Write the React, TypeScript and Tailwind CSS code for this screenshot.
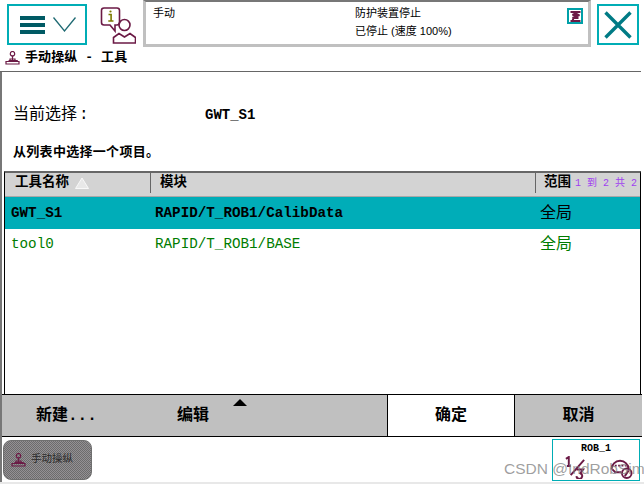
const CJK = "font-['Liberation_Mono','Noto_Sans_CJK_SC',monospace]";

const ROWS = [
  { name: "GWT_S1", module: "RAPID/T_ROB1/CalibData", scope: "全局", selected: true },
  { name: "tool0", module: "RAPID/T_ROB1/BASE", scope: "全局", selected: false },
];

function Joystick({ className }: { className: string }) {
  return (
    <svg viewBox="0 0 15 14" className={className} fill="none" stroke="currentColor" strokeWidth="1.2">
      <circle cx="7.5" cy="2.7" r="2.2" />
      <path d="M7.5 5v4" />
      <path d="M5 9.5V8h5v1.5" />
      <path d="M3.6 9.5h9.2v0M1 13V10.5h13V13z" />
    </svg>
  );
}

function MenuButton() {
  return (
    <div className="ml-[7px] mt-[4px] w-[80px] h-[41px] border-2 border-[#00adb5] flex items-center pl-[11px] gap-[8px] shrink-0">
      <div className="flex flex-col gap-[3px] w-[25px]">
        <div className="h-[4px] bg-[#005a64]" />
        <div className="h-[4px] bg-[#005a64]" />
        <div className="h-[4px] bg-[#005a64]" />
      </div>
      <svg viewBox="0 0 23 15" className="w-[23px] h-[15px]" fill="none" stroke="#1f6a73" strokeWidth="1.3">
        <path d="M0.5 0.5L11.5 14L22.5 0.5" />
      </svg>
    </div>
  );
}

function InfoIcon() {
  return (
    <svg viewBox="0 0 36 38" className="w-[36px] h-[38px] ml-[13px] mt-[6px] shrink-0" fill="none" stroke="#6b1a45" strokeWidth="1.6">
      <path d="M4 2h13a2.5 2.5 0 0 1 2.5 2.5v12a2.5 2.5 0 0 1-2.5 2.5h-2l0 6-5-6H4a2.500 2.500 0 0 1-2.500-2.500V4.500A2.500 2.500 0 0 1 4 2z" />
      <circle cx="10.500" cy="5.500" r="1.100" fill="#7a7a00" stroke="none" />
      <path d="M8.500 8.500h2.600v6.500M8.300 15h5.200" stroke="#7a7a00" strokeWidth="1.600" />
      <circle cx="24.500" cy="19" r="5.500" />
      <path d="M13.500 37v-5.500l5.500-4 5.500 3.500 5.500-3.500 5.500 4V37z" />
    </svg>
  );
}

function StatusPanel() {
  return (
    <div className="w-[448px] h-[47px] ml-[7px] shrink-0 border-x-[3px] border-b-[3px] border-x-[#c0c0c0] border-b-[#c0c0c0] border-t-2 border-t-[#777777] flex text-[11px] leading-[18px] text-black font-['Liberation_Sans','Noto_Sans_CJK_SC',sans-serif]">
      <div className="w-[209px] pl-[7px] pt-[2px]">手动</div>
      <div className="flex-1 pt-[2px]">
        <div>防护装置停止</div>
        <div>已停止 (速度 100%)</div>
      </div>
      <div className="mt-[6px] mr-[5px] w-[16px] h-[16px] border-2 border-[#00a0a8] flex items-center justify-center">
        <svg viewBox="0 0 10 11" className="w-[11px] h-[11px]" fill="none" stroke="#6b1a45" strokeWidth="2">
          <path d="M0 1h10M8 1L2 4h7L2 7h6M0 10h10M3 7l-1 3" />
        </svg>
      </div>
    </div>
  );
}

function CloseButton() {
  return (
    <div className="ml-[6px] mt-[4px] w-[42px] h-[41px] border-2 border-[#00adb5] flex items-center justify-center shrink-0">
      <svg viewBox="0 0 28 28" className="w-[28px] h-[28px]" stroke="#007b85" strokeWidth="3.400">
        <path d="M1.500 1.500L26.500 26.500M26.500 1.500L1.500 26.500" />
      </svg>
    </div>
  );
}

function RobBox() {
  return (
    <div className="mr-[2px] mt-[2px] w-[88px] h-[42px] border border-[#00adb5] flex flex-col items-center">
      <div className="text-[10px] leading-[12px] mt-[3px] font-bold text-black">ROB_1</div>
      <div className="flex gap-[22px] mt-px ml-[4px]">
        <svg viewBox="0 0 24 24" className="w-[23px] h-[23px]" fill="none" stroke="#6b1a45" strokeWidth="2">
          <path d="M2 3l3-2v10M3 10.500h4M7 20L21 4" />
          <path d="M13 14h7l-3 4a3 3 0 1 1-4 3" />
        </svg>
        <svg viewBox="0 0 24 24" className="w-[24px] h-[23px]" fill="none" stroke="#6b1a45" strokeWidth="2">
          <path d="M2 14a9 9 0 0 1 18 0" />
          <path d="M2 10h18" strokeDasharray="2 1.500" />
          <path d="M3 14l3 3h6" />
          <circle cx="18" cy="18" r="5" />
          <path d="M16 21l4-6" />
        </svg>
      </div>
    </div>
  );
}

export default function App() {
  return (
    <div className={`relative w-[644px] h-[484px] bg-white flex flex-col overflow-hidden border-b-2 border-b-[#e8e8e8] ${CJK}`}>
      <div className="flex h-[47px] shrink-0">
        <MenuButton />
        <InfoIcon />
        <StatusPanel />
        <CloseButton />
      </div>

      <div className="h-[25px] shrink-0 mr-[3px] border-b border-[#666666] flex items-center pl-[5px] pb-[2px] text-black">
        <Joystick className="w-[15px] h-[14px] text-[#6b1a45]" />
        <span className="ml-[5px] text-[13px] font-bold tracking-[0.1px]">手动操纵 - 工具</span>
      </div>

      <div className="flex-1 flex flex-col min-h-0 mr-[2px] border-l-2 border-[#777777]">
        <div className="h-[99px] shrink-0 pl-[11px] text-black">
          <div className="flex items-center h-[20px] mt-[33px] text-[16px]">
            <span className="w-[192px]">当前选择<span className="ml-[2px]">:</span></span>
            <span className="text-[14px] font-bold">GWT_S1</span>
          </div>
          <div className="mt-[20px] text-[13px] font-bold leading-[16px] tracking-[0.3px]">从列表中选择一个项目。</div>
        </div>

        <div className="flex-1 flex flex-col min-h-0 ml-[2px] mr-[1px] border-x border-x-black border-t-2 border-t-[#666666]">
          <div className="flex h-[24px] shrink-0 bg-[#d3d3d3] text-[13.5px] font-bold text-black border-b border-[#a8a8a8] pb-[3px]">
            <div className="w-[146px] pl-[10px] flex items-center border-r border-[#666666]">
              <span>工具名称</span>
              <svg viewBox="0 0 14 12" className="w-[14px] h-[12px] ml-[6px]">
                <path d="M7 1L13.500 11.500H0.500z" fill="#e8e8e8" stroke="#f8f8f8" />
              </svg>
            </div>
            <div className="w-[385px] pl-[9px] flex items-center border-r border-[#666666]">模块</div>
            <div className="flex-1 pl-[8px] flex items-center whitespace-nowrap">
              <span>范围</span>
              <span className="ml-[4px] text-[10px] font-normal text-[#a040f0]">1 到 2 共 2</span>
            </div>
          </div>

          <div className="flex-1 min-h-0">
            {ROWS.map((row) => (
              <div
                key={row.name}
                className={row.selected
                  ? "flex items-center h-[32px] pt-px bg-[#00adb8] text-black font-bold text-[14.25px]"
                  : "flex items-center h-[31px] pt-px text-[#007c00] text-[14.25px]"}
              >
                <span className="w-[150px] pl-[6px]">{row.name}</span>
                <span className="w-[385px]">{row.module}</span>
                <span className="text-[16px] font-normal">{row.scope}</span>
              </div>
            ))}
          </div>
        </div>

        <div className="flex h-[43px] shrink-0 border-y border-black bg-[#c0c0c0] text-[16px] font-bold text-black">
          <div className="relative w-[385px] flex items-center">
            <span className="ml-[34px] w-[141px]">新建...</span>
            <span>编辑</span>
            <div className="absolute left-[231px] top-[4px] border-x-[7px] border-x-transparent border-b-[7px] border-b-black" />
          </div>
          <div className="w-[128px] bg-white border-x border-black flex items-center justify-center">确定</div>
          <div className="flex-1 flex items-center justify-center">取消</div>
        </div>

        <div className="flex justify-between h-[45px] shrink-0">
          <div className="ml-px mt-[3px] w-[89px] h-[40px] rounded-lg bg-[repeating-conic-gradient(#6c6c6c_0_25%,#949094_0_50%)] bg-[length:2px_2px] flex items-center pl-[7px] text-[10.5px] text-[#2a2a2a] border border-[#6f6f6f]">
            <Joystick className="w-[15px] h-[14px] text-[#6b1a45]" />
            <span className="ml-[5px]">手动操纵</span>
          </div>
          <RobBox />
        </div>
      </div>

      {/* CSDN 水印 */}
      <div className="absolute left-[504px] top-[460px] text-[15.5px] leading-[18px] text-[#808080]/75 font-['Liberation_Sans',sans-serif] whitespace-nowrap">
        CSDN @IndRobSim
      </div>
    </div>
  );
}
